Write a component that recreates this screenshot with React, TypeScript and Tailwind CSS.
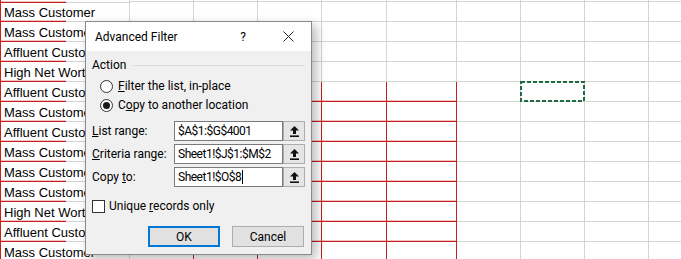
import React from "react";

const customers = [
  "Mass Customer",
  "Mass Customer",
  "Affluent Customer",
  "High Net Worth",
  "Affluent Customer",
  "Mass Customer",
  "Affluent Customer",
  "Mass Customer",
  "Mass Customer",
  "Mass Customer",
  "High Net Worth",
  "Affluent Customer",
  "Mass Customer",
];

// columns C..J
const colWidths = ["w-[64px]", "w-[64px]", "w-[64px]", "w-[65px]", "w-[70px]", "w-[64px]", "w-[64px]", "w-[64px]"];

function Marquee() {
  return (
    <svg className="absolute -left-px -top-px" width="65" height="21" viewBox="0 0 65 21">
      <rect x="1" y="1" width="63" height="19" fill="none" stroke="#1f6b44" strokeWidth="2" strokeDasharray="4 2" />
    </svg>
  );
}

function cellLines(red: boolean, i: number) {
  if (red && i === 0) return "border-r border-r-[#c81e1e] border-b border-b-[#d4d4d4]";
  if (red && i >= 1 && i <= 4)
    return "border-r border-r-[#c81e1e] border-b border-b-[#c81e1e] shadow-[inset_0_-1px_0_#f1c3c3]";
  return "border-r border-r-[#d4d4d4] border-b border-b-[#d4d4d4]";
}

function SheetRow({ text, red, marquee, strip }: { text?: string; red: boolean; marquee?: boolean; strip?: boolean }) {
  return (
    <div className={`flex ${strip ? "h-[2px]" : "h-5"}`}>
      <div className="w-[130px] shrink-0 h-full border-l border-l-[#c81e1e] border-r border-r-[#d4d4d4] bg-[linear-gradient(to_right,#c81e1e_65px,#d4d4d4_65px),linear-gradient(to_right,#f1c3c3_65px,transparent_65px)] bg-[length:100%_1px,100%_2px] bg-bottom bg-no-repeat pl-[3px] pt-[3px] overflow-hidden whitespace-nowrap font-['Liberation_Sans',Arial,sans-serif] text-[13px] leading-[15px] text-black">
        {text}
      </div>
      {colWidths.map((w, i) => (
        <div key={i} className={`${w} shrink-0 h-full relative ${cellLines(red, i)}`}>
          {marquee && i === 6 ? <Marquee /> : null}
        </div>
      ))}
      <div className="flex-1 h-full border-b border-b-[#d4d4d4]" />
    </div>
  );
}

function Radio({ checked }: { checked?: boolean }) {
  return (
    <svg width="13" height="13" viewBox="0 0 13 13" className="shrink-0">
      <circle cx="6.5" cy="6.5" r="6" fill="#fff" stroke="#333" strokeWidth="1" />
      {checked ? <circle cx="6.5" cy="6.5" r="3.5" fill="#1a1a1a" /> : null}
    </svg>
  );
}

function UpArrow() {
  return (
    <svg width="9" height="11" viewBox="0 0 9 11">
      <path d="M4.5 0 L9 4.6 H6 V8 H3 V4.6 H0 Z" fill="#111" />
      <rect x="0" y="9.4" width="9" height="1.6" fill="#111" />
    </svg>
  );
}

function RangeField({ label, value, cursor }: { label: React.ReactNode; value: string; cursor?: boolean }) {
  return (
    <div className="flex items-center h-5">
      <div className="w-[82px] shrink-0 leading-4 whitespace-nowrap">{label}</div>
      <div className="flex-1 h-full flex">
        <div className="flex-1 h-full border border-[#7a7a7a] bg-white flex items-center pl-[3px] leading-[18px]">
          <span className="tracking-[-0.5px]">{value}</span>
          {cursor ? <span className="inline-block w-px h-[14px] bg-black ml-px" /> : null}
        </div>
        <div className="w-[22px] h-full border border-[#adadad] bg-[#e5e5e5] flex items-center justify-center">
          <UpArrow />
        </div>
      </div>
    </div>
  );
}

export default function App() {
  return (
    <div className="relative w-[681px] h-[259px] overflow-hidden bg-white">
      <SheetRow strip red={false} />
      {customers.map((c, i) => (
        <SheetRow key={i} text={c} red={i >= 4} marquee={i === 4} />
      ))}

      <div className="absolute left-[85px] top-[21px] w-[227px] h-[234px] border border-[#8a8a8a] bg-[#f0f0f0] shadow-[4px_4px_10px_rgba(0,0,0,0.28)] font-['Roboto',sans-serif] text-[12px] text-black flex flex-col">
        <div className="h-[29px] shrink-0 bg-white flex items-center pl-[9px] pr-[17px]">
          <span className="leading-4">Advanced Filter</span>
          <span className="ml-auto leading-4">?</span>
          <svg className="ml-[37px]" width="11" height="11" viewBox="0 0 11 11">
            <path d="M0.5 0.5 L10.5 10.5 M10.5 0.5 L0.5 10.5" stroke="#222" strokeWidth="1" />
          </svg>
        </div>

        <div className="flex-1 px-[6px] pt-[6px] flex flex-col">
          <div className="flex items-center gap-[7px] h-4">
            <span className="leading-4">Action</span>
            <div className="flex-1 h-px bg-[#dcdcdc]" />
          </div>

          <div className="mt-[5px] flex flex-col gap-[3px] pl-[8px]">
            <div className="flex items-center h-4 gap-[5px]">
              <Radio />
              <span className="leading-4">
                <u>F</u>ilter the list, in-place
              </span>
            </div>
            <div className="flex items-center h-4 gap-[5px]">
              <Radio checked />
              <span className="leading-4">
                C<u>o</u>py to another location
              </span>
            </div>
          </div>

          <div className="mt-[8px] flex flex-col gap-[3px]">
            <RangeField label={<><u>L</u>ist range:</>} value="$A$1:$G$4001" />
            <RangeField label={<><u>C</u>riteria range:</>} value="Sheet1!$J$1:$M$2" />
            <RangeField label={<>Copy <u>t</u>o:</>} value="Sheet1!$O$8" cursor />
          </div>

          <div className="mt-[11px] flex items-center h-4 gap-[4px]">
            <div className="w-[13px] h-[13px] border border-[#333] bg-white shrink-0" />
            <span className="leading-4">
              Unique <u>r</u>ecords only
            </span>
          </div>

          <div className="mt-[12px] flex justify-end gap-[12px] pr-[1px]">
            <button className="w-[72px] h-[21px] border-2 border-[#0078d7] bg-[#e1e1e1] leading-4">OK</button>
            <button className="w-[72px] h-[21px] border border-[#adadad] bg-[#e1e1e1] leading-4">Cancel</button>
          </div>
        </div>
      </div>
    </div>
  );
}
